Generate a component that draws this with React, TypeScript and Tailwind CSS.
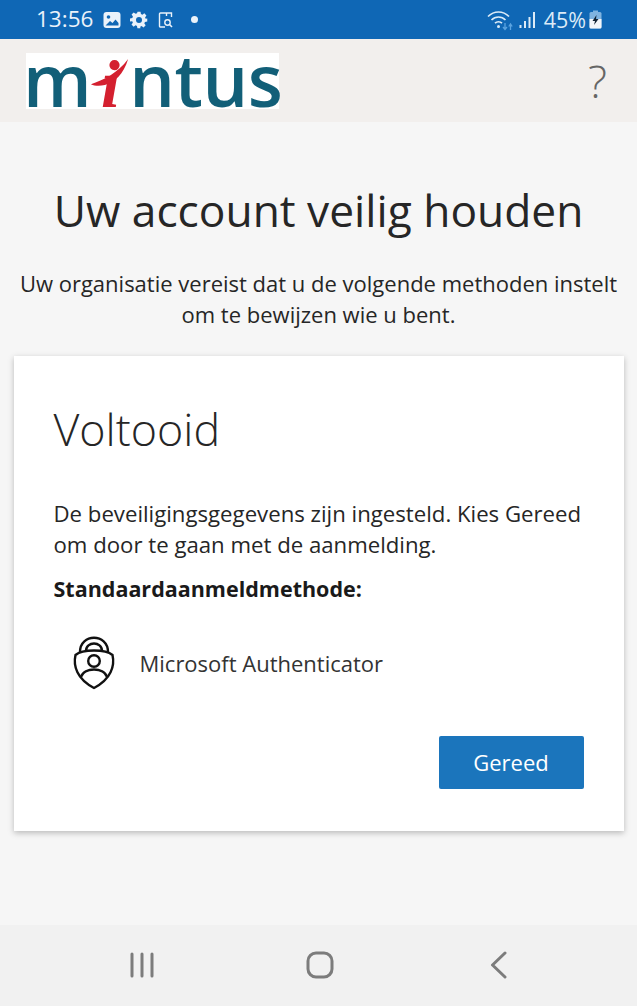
const font = "font-['Open_Sans',sans-serif]";

function StatusIcons() {
  return (
    <div className="flex items-center">
      <svg width="18" height="18" viewBox="0 0 18 18" aria-hidden="true">
        <rect x="0.500" y="1" width="17" height="16" rx="3" fill="#eaf2fa" />
        <circle cx="5.500" cy="6" r="1.800" fill="#0f67b5" />
        <path d="M2.500 14.500 L7 10 L9.500 12 L12.500 8.500 L15.500 12 V14.500 Z" fill="#0f67b5" />
      </svg>
      <svg className="ml-[9px]" width="18" height="18" viewBox="0 0 24 24" aria-hidden="true">
        <path
          fill="#eaf2fa"
          fillRule="evenodd"
          d="M10 1h4l.6 3.100 1.900.8 2.600-1.800 2.800 2.800-1.800 2.600.8 1.900L23 10v4l-3.100.6-.8 1.900 1.800 2.600-2.800 2.800-2.600-1.800-1.900.8L13.900 23h-4l-.6-3.100-1.900-.8-2.600 1.800L2 18.100l1.800-2.600-.8-1.900L0 13.900v-4l3.100-.6.8-1.900L2.100 4.800l2.800-2.800 2.600 1.800 1.900-.8zM12 8a4 4 0 1 0 0 8 4 4 0 0 0 0-8z"
        />
      </svg>
      <svg className="ml-[9px]" width="18" height="18" viewBox="0 0 18 18" fill="none" stroke="#eaf2fa" aria-hidden="true">
        <path d="M8 16H3.500A1 1 0 0 1 2.500 15V3A1 1 0 0 1 3.500 2H14.500V6" strokeWidth="1.400" />
        <path d="M9.500 2V5" strokeWidth="1.400" />
        <circle cx="10.500" cy="11.500" r="2.700" strokeWidth="1.400" />
        <path d="M12.500 13.500L15 16" strokeWidth="1.600" />
      </svg>
      <div className="ml-[16px] h-[7px] w-[7px] rounded-full bg-[#eaf2fa]" />
    </div>
  );
}

function SystemIcons() {
  return (
    <div className="flex items-center">
      <svg width="28" height="22" viewBox="0 0 28 22" fill="none" aria-hidden="true">
        <path d="M2 7.500C8 1.500 17 1.500 23 7.500" stroke="#dcebf7" strokeWidth="1.700" />
        <path d="M5.500 11C9.500 7 15.500 7 19.500 11" stroke="#dcebf7" strokeWidth="1.700" />
        <path d="M9 14.200C11 12.300 14 12.300 16 14.200" stroke="#dcebf7" strokeWidth="1.700" />
        <circle cx="12.500" cy="17.500" r="1.500" fill="#dcebf7" />
        <path d="M19 14V20M17 18L19 20.500L21 18" stroke="#5aa3e0" strokeWidth="1.300" />
        <path d="M24.500 21V15.500M22.800 17.500L24.500 15L26.200 17.500" stroke="#5aa3e0" strokeWidth="1.300" />
      </svg>
      <svg className="ml-[5px]" width="17" height="18" viewBox="0 0 17 18" aria-hidden="true">
        <rect x="0.500" y="14" width="2" height="3" fill="#dcebf7" />
        <rect x="5" y="10" width="2" height="7" fill="#dcebf7" />
        <rect x="9.500" y="6" width="2" height="11" fill="#dcebf7" />
        <rect x="14" y="1" width="2" height="16" fill="#dcebf7" />
      </svg>
      <span className={`${font} ml-[8px] text-[21.500px] leading-none text-[#dcebf7]`}>45%</span>
      <svg className="ml-[3px]" width="13" height="19" viewBox="0 0 13 19" aria-hidden="true">
        <rect x="4" y="0.500" width="5" height="2" fill="#7fb3e0" />
        <rect x="0.500" y="2" width="12" height="16.500" rx="1.500" fill="#7fb3e0" />
        <path d="M0.500 9H12.500V17A1.500 1.500 0 0 1 11 18.500H2A1.500 1.500 0 0 1 0.500 17Z" fill="#f2f6fa" />
        <path d="M7.500 5L3.500 11H6L5 15L9.500 9H7Z" fill="#123" />
      </svg>
    </div>
  );
}

function Logo() {
  return (
    <div className="flex h-[56px] w-[253px] items-start bg-white">
      <span className="-ml-[3px] font-['Open_Sans',sans-serif] text-[72px] leading-[52px] font-semibold tracking-[-0.5px] whitespace-nowrap text-[#125f78]">
        m
        <span className="relative inline-block w-[38px] text-center font-['Liberation_Serif',serif] text-[68px] font-bold text-[#d4202f] italic">
          i
          {/* the swoosh across the red i */}
          <svg className="absolute top-[-5px] left-[-1px]" width="40" height="40" viewBox="0 0 43 40" aria-hidden="true">
            <path d="M1 32C14 28 30 20 41 5C36 22 26 30 16 33C10 34 5 34 1 32Z" fill="#d4202f" />
          </svg>
        </span>
        ntus
      </span>
    </div>
  );
}

function AuthenticatorIcon() {
  return (
    <svg width="44" height="54" viewBox="0 0 44 54" fill="none" stroke="#111" strokeWidth="2.400" aria-hidden="true">
      <path d="M8 16C8 -3 36 -3 36 16" />
      <path d="M14 15C14 5 30 5 30 15" />
      <path d="M22 14.500C12 14.500 7 16 3.500 19C1 30 5 43 22 52C39 43 43 30 40.500 19C37 16 32 14.500 22 14.500Z" />
      <circle cx="22" cy="25" r="5.800" />
      <path d="M9 41C12 31 32 31 35 41" />
    </svg>
  );
}

export default function App() {
  return (
    <div className={`${font} flex h-[1006px] w-[637px] flex-col overflow-hidden bg-[#f6f6f6]`}>
      <div className="flex h-[39px] shrink-0 items-center justify-between bg-[#0f67b5] pr-[35px] pl-[36px]">
        <div className="flex items-center gap-[10px]">
          <span className="text-[22.500px] leading-none text-[#eaf2fa]">13:56</span>
          <StatusIcons />
        </div>
        <SystemIcons />
      </div>

      <header className="flex h-[83px] shrink-0 items-start justify-between bg-[#f2efed] pt-[14px] pr-[30px] pl-[26px]">
        <Logo />
        <span className="text-[45px] leading-[56px] font-light text-[#666]">?</span>
      </header>

      <main className="flex flex-1 flex-col items-center px-[14px]">
        <h1 className="mt-[54px] text-[44.300px] leading-[68px] font-normal whitespace-nowrap text-[#262626]">
          Uw account veilig houden
        </h1>
        <p className="mt-[24px] text-center text-[22px] leading-[31px] text-[#262626]">
          Uw organisatie vereist dat u de volgende methoden instelt
          <br />
          om te bewijzen wie u bent.
        </p>

        <section className="mt-[26px] h-[475px] w-[610px] bg-white px-[40px] pt-[42px] shadow-[0_2px_6px_rgba(0,0,0,0.25)]">
          <h2 className="text-[44.800px] leading-[62px] font-light text-[#262626]">Voltooid</h2>
          <p className="mt-[38px] text-[22.200px] leading-[31px] text-[#262626]">
            De beveiligingsgegevens zijn ingesteld. Kies Gereed
            <br />
            om door te gaan met de aanmelding.
          </p>
          <p className="mt-[13px] text-[21.500px] leading-[31px] font-bold text-[#1a1a1a]">Standaardaanmeldmethode:</p>
          <div className="mt-[32px] flex items-center pl-[18px]">
            <AuthenticatorIcon />
            <span className="ml-[24px] text-[22px] leading-[31px] text-[#333]">Microsoft Authenticator</span>
          </div>
          <div className="mt-[46px] flex justify-end">
            <button
              type="button"
              className="h-[53px] w-[145px] rounded-[2px] bg-[#1b75bc] text-[22px] text-white"
            >
              Gereed
            </button>
          </div>
        </section>
      </main>

      <nav className="flex h-[81px] shrink-0 items-center bg-[#f1f1f1] pb-[1px] pl-[130px]">
        <svg width="24" height="26" viewBox="0 0 24 26" stroke="#7c7c7c" strokeWidth="3" strokeLinecap="round" aria-hidden="true">
          <path d="M2 2V24M12 2V24M22 2V24" />
        </svg>
        <svg className="ml-[152px]" width="28" height="28" viewBox="0 0 28 28" fill="none" stroke="#7c7c7c" strokeWidth="3" aria-hidden="true">
          <rect x="2" y="2" width="24" height="24" rx="8" />
        </svg>
        <svg className="ml-[156px]" width="18" height="28" viewBox="0 0 18 28" fill="none" stroke="#7c7c7c" strokeWidth="3" strokeLinecap="round" strokeLinejoin="round" aria-hidden="true">
          <path d="M15 2L2.500 14L15 26" />
        </svg>
      </nav>
    </div>
  );
}
